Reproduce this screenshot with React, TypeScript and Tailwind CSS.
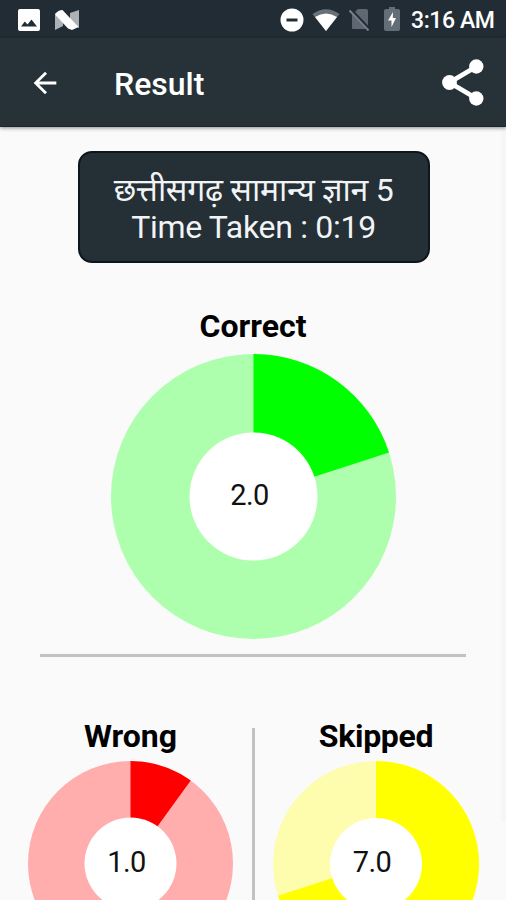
import { MdArrowBack } from "react-icons/md"

interface DonutProps {
  size: number
  hole: number
  value: number
  total: number
  color: string
  track: string
}

function Donut({ size, hole, value, total, color, track }: DonutProps) {
  const r = size / 2
  const angle = (value / total) * Math.PI * 2
  const x = r + r * Math.sin(angle)
  const y = r - r * Math.cos(angle)
  const large = value / total > 0.5 ? 1 : 0

  return (
    <svg width={size} height={size} viewBox={`0 0 ${size} ${size}`} className="block shrink-0">
      <circle cx={r} cy={r} r={r} fill={track} />
      <path d={`M${r} ${r}V0A${r} ${r} 0 ${large} 1 ${x} ${y}Z`} fill={color} />
      <circle cx={r} cy={r} r={hole} fill="#fff" />
      <text x={r - 4} y={r + 8} textAnchor="middle" fontSize="29" letterSpacing="-0.5" fill="#111">
        {value.toFixed(1)}
      </text>
    </svg>
  )
}

function StatusBar() {
  return (
    <div className="flex h-[38px] shrink-0 items-center bg-[#222c35] pt-[2px] pr-[11px] pl-[18px] text-white">
      {/* Picture */}
      <svg width="22" height="22" viewBox="0 0 22 22">
        <path fillRule="evenodd" fill="#fff" d="M2 0H20Q22 0 22 2V20Q22 22 20 22H2Q0 22 0 20V2Q0 0 2 0ZM3 17.500H19L13.500 10.500L9.500 15.500L6.800 12.500Z" />
      </svg>
      {/* Nougat */}
      <svg width="26" height="20" viewBox="0 0 26 20" className="ml-[14px]">
        <path d="M1 3L9 7V16L1 20Z" fill="#aeb2b5" />
        <path d="M16 3L25 0V18L16 14Z" fill="#aeb2b5" />
        <path d="M1.500 4Q4 0 8.500 0L24.500 17L18 20L14 18.500L1.500 5Z" fill="#fff" />
      </svg>
      <div className="ml-auto flex items-center">
        <svg width="24" height="24" viewBox="0 0 24 24">
          <circle cx="12" cy="12" r="11.500" fill="#fff" />
          <path d="M6.500 10.500H17.500V13.500H6.500Z" fill="#222c35" />
        </svg>
        <svg width="28" height="22" viewBox="0 0 28 22" className="ml-[8px]">
          <path d="M0.500 5Q14 -4.500 27.500 5L14 22Z" fill="#68717a" />
          <path d="M3 8Q14 0.800 25 8L14 22Z" fill="#fff" />
        </svg>
        <svg width="22" height="22" viewBox="0 0 22 22" className="ml-[9px]">
          <path d="M9 0H17Q19 0 19 2V20H4Q3 20 3 19V6Z" fill="#5f6872" />
          <path d="M1 0.500L21 21.500" stroke="#222c35" strokeWidth="4" />
          <path d="M0.500 1.500L19.500 21.500" stroke="#77808a" strokeWidth="2" />
        </svg>
        <svg width="16" height="24" viewBox="0 0 16 24" className="mb-[2px] ml-[13px]">
          <path d="M5 0H11V2H14Q16 2 16 4V22Q16 24 14 24H2Q0 24 0 22V4Q0 2 2 2H5Z" fill="#646e77" />
          <path d="M9 5L4 13.500H7.500V20L12 11H8.800Z" fill="#fff" />
        </svg>
        <span className="ml-[11px] w-[84px] text-[23px] leading-none font-medium tracking-[-0.4px] whitespace-nowrap">3:16 AM</span>
      </div>
    </div>
  )
}

function ShareIcon() {
  return (
    <svg width="42" height="47" viewBox="0 0 42 47" className="ml-auto">
      <path d="M34.500 7.500L7.500 23.500L34.500 39.500" fill="none" stroke="#fff" strokeWidth="4.800" />
      <circle cx="34.300" cy="7.500" r="7.200" fill="#fff" />
      <circle cx="7.500" cy="23.500" r="7.400" fill="#fff" />
      <circle cx="34.300" cy="39.500" r="7.200" fill="#fff" />
    </svg>
  )
}

export default function App() {
  return (
    <div className="relative flex h-[900px] w-[506px] flex-col overflow-hidden bg-[#fafafa] font-['Roboto','Noto_Sans',sans-serif] text-black">
      <StatusBar />

      <header className="z-10 flex h-[89px] shrink-0 items-center border-b border-[#1b252b] bg-[#263238] pt-px pr-[22px] pl-[28px] text-white shadow-[0_1px_4px_rgba(0,0,0,0.45)]">
        <MdArrowBack size={34} />
        <h1 className="mt-[2px] ml-[52px] text-[32px] leading-none font-medium">Result</h1>
        <ShareIcon />
      </header>

      <main className="flex flex-1 flex-col items-center pt-[24px]">
        <div className="ml-px flex h-[112px] w-[352px] shrink-0 flex-col items-center justify-center rounded-[14px] border-2 border-[#0e161d] bg-[#242f36] pt-[3px] text-[32px] leading-[37px] tracking-[-0.3px] text-[#f1f3f5]">
          <p className="whitespace-nowrap">छत्तीसगढ़ सामान्य ज्ञान 5</p>
          <p className="whitespace-nowrap">Time Taken : 0:19</p>
        </div>

        <h2 className="mt-[44px] mb-[9px] text-[32px] leading-[38px] font-bold">Correct</h2>
        <Donut size={285} hole={64} value={2} total={10} color="#00ff00" track="#adffad" />
        <div className="mt-[15px] h-[3px] w-[426px] shrink-0 bg-[#c2c2c2]" />

        <div className="mt-[60px] flex w-full shrink-0 justify-center">
          <div className="flex w-[252px] flex-col items-center pl-[9px]">
            <h2 className="mb-[6px] text-[32px] leading-[38px] font-bold">Wrong</h2>
            <Donut size={205} hole={46} value={1} total={10} color="#ff0000" track="#ffadad" />
          </div>
          <div className="mt-[11px] w-[3px] bg-[#c2c2c2]" />
          <div className="flex w-[251px] flex-col items-center pr-[9px]">
            <h2 className="mb-[6px] text-[32px] leading-[38px] font-bold tracking-[-0.3px]">Skipped</h2>
            <Donut size={206} hole={46} value={7} total={10} color="#ffff00" track="#fdfdad" />
          </div>
        </div>
      </main>

      {/* Scrollbar thumb, nearly faded out */}
      <div className="absolute top-[127px] right-0 h-[695px] w-[5px] bg-[#f6f6f6]" />
    </div>
  )
}
